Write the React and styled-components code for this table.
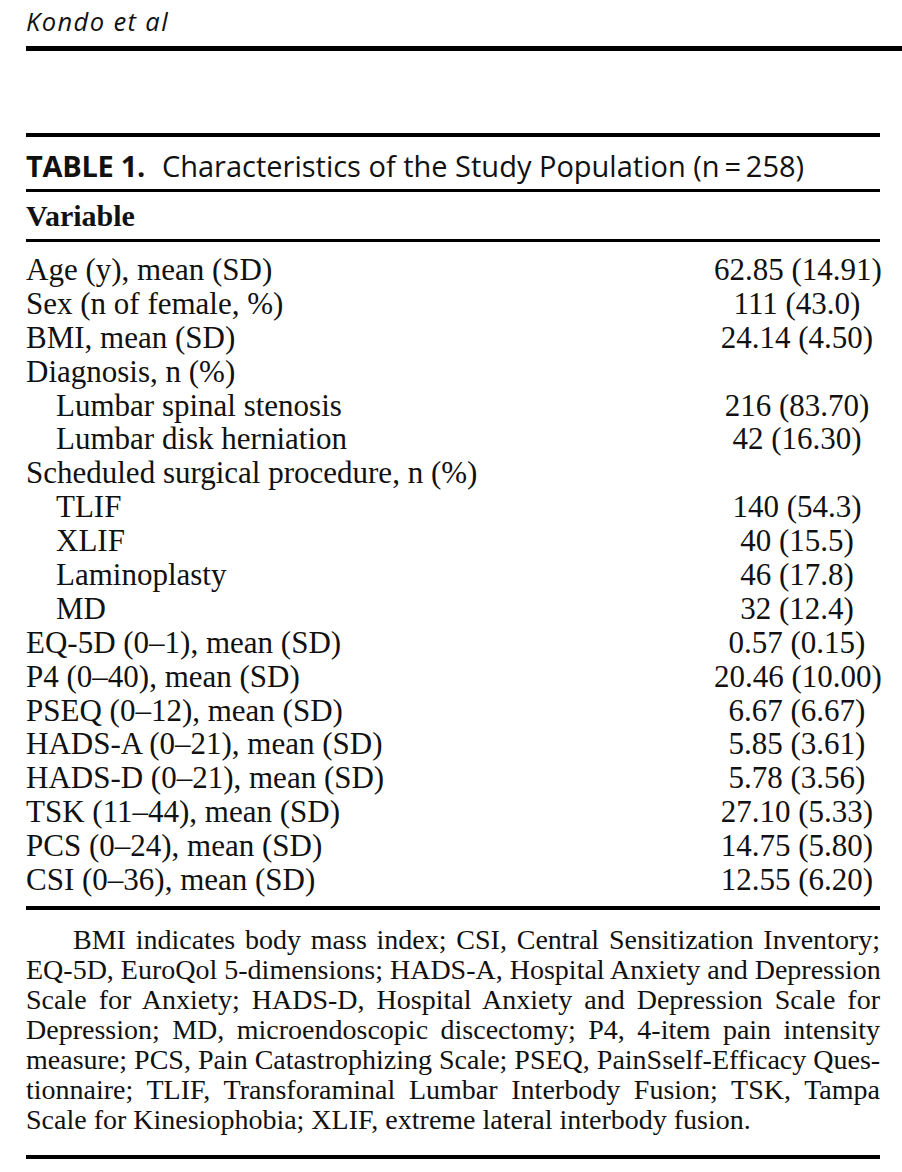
import React from "react";
import styled, { createGlobalStyle } from "styled-components";

const Global = createGlobalStyle`
  html, body { margin: 0; padding: 0; background: #fff; }
  body { color: #111; font-family: "Liberation Serif", "Times New Roman", serif; }
`;

const Page = styled.div`
  width: 902px;
  min-height: 1172px;
  padding-left: 26px;
  box-sizing: border-box;
  display: flex;
  flex-direction: column;
`;

const RunningHead = styled.header`
  font-family: "Open Sans", Lato, sans-serif;
  font-style: italic;
  font-size: 25.5px;
  letter-spacing: 1.4px;
  line-height: 32px;
  padding-top: 5px;
  height: 51px;
  box-sizing: border-box;
  border-bottom: 5px solid #000;
  margin-bottom: 82px;
`;

const Table = styled.section`
  width: 854px;
  border-top: 4px solid #000;
  border-bottom: 4px solid #000;
`;

const Title = styled.div`
  font-family: "Open Sans", Lato, sans-serif;
  font-size: 29px;
  height: 55px;
  padding-top: 4px;
  box-sizing: border-box;
  display: flex;
  align-items: center;
  white-space: pre;
  border-bottom: 3px solid #000;
  b { font-weight: 700; margin-right: 17px; letter-spacing: -0.3px; }
`;

const HeadRow = styled.div`
  height: 47px;
  display: flex;
  align-items: center;
  font-weight: 700;
  font-size: 30px;
  border-bottom: 3px solid #000;
`;

const Body = styled.div`
  padding: 11px 0 9px;
`;

const Row = styled.div`
  display: grid;
  grid-template-columns: 1fr 166px;
  height: 33.9px;
  align-items: center;
  font-size: 31px;
  line-height: 33.9px;
`;

const Label = styled.span`
  padding-left: ${(p) => (p.$indent ? 30 : 0)}px;
  white-space: nowrap;
`;

const Value = styled.span`
  text-align: center;
  white-space: nowrap;
`;

const Notes = styled.div`
  width: 854px;
  padding: 15px 0 20px;
  border-bottom: 4px solid #000;
  font-size: 28px;
  line-height: 30px;
`;

const NoteLine = styled.div`
  text-align: ${(p) => (p.$last ? "left" : "justify")};
  text-align-last: ${(p) => (p.$last ? "left" : "justify")};
  padding-left: ${(p) => (p.$first ? 47 : 0)}px;
  white-space: nowrap;
`;

const rows = [
  ["Age (y), mean (SD)", "62.85 (14.91)"],
  ["Sex (n of female, %)", "111 (43.0)"],
  ["BMI, mean (SD)", "24.14 (4.50)"],
  ["Diagnosis, n (%)", ""],
  ["Lumbar spinal stenosis", "216 (83.70)", true],
  ["Lumbar disk herniation", "42 (16.30)", true],
  ["Scheduled surgical procedure, n (%)", ""],
  ["TLIF", "140 (54.3)", true],
  ["XLIF", "40 (15.5)", true],
  ["Laminoplasty", "46 (17.8)", true],
  ["MD", "32 (12.4)", true],
  ["EQ-5D (0–1), mean (SD)", "0.57 (0.15)"],
  ["P4 (0–40), mean (SD)", "20.46 (10.00)"],
  ["PSEQ (0–12), mean (SD)", "6.67 (6.67)"],
  ["HADS-A (0–21), mean (SD)", "5.85 (3.61)"],
  ["HADS-D (0–21), mean (SD)", "5.78 (3.56)"],
  ["TSK (11–44), mean (SD)", "27.10 (5.33)"],
  ["PCS (0–24), mean (SD)", "14.75 (5.80)"],
  ["CSI (0–36), mean (SD)", "12.55 (6.20)"],
];

const notes = [
  "BMI indicates body mass index; CSI, Central Sensitization Inventory;",
  "EQ-5D, EuroQol 5-dimensions; HADS-A, Hospital Anxiety and Depression",
  "Scale for Anxiety; HADS-D, Hospital Anxiety and Depression Scale for",
  "Depression; MD, microendoscopic discectomy; P4, 4-item pain intensity",
  "measure; PCS, Pain Catastrophizing Scale; PSEQ, PainSself-Efficacy Ques-",
  "tionnaire; TLIF, Transforaminal Lumbar Interbody Fusion; TSK, Tampa",
  "Scale for Kinesiophobia; XLIF, extreme lateral interbody fusion.",
];

export default function App() {
  return (
    <>
      <Global />
      <Page>
        <RunningHead>Kondo et al</RunningHead>
        <Table>
          <Title>
            <b>TABLE 1.</b>Characteristics of the Study Population (n{"\u2009"}={"\u2009"}258)
          </Title>
          <HeadRow>Variable</HeadRow>
          <Body>
            {rows.map(([l, v, ind]) => (
              <Row key={l}>
                <Label $indent={ind}>{l}</Label>
                <Value>{v}</Value>
              </Row>
            ))}
          </Body>
        </Table>
        <Notes>
          {notes.map((n, i) => (
            <NoteLine key={i} $first={i === 0} $last={i === notes.length - 1}>
              {n}
            </NoteLine>
          ))}
        </Notes>
      </Page>
    </>
  );
}
